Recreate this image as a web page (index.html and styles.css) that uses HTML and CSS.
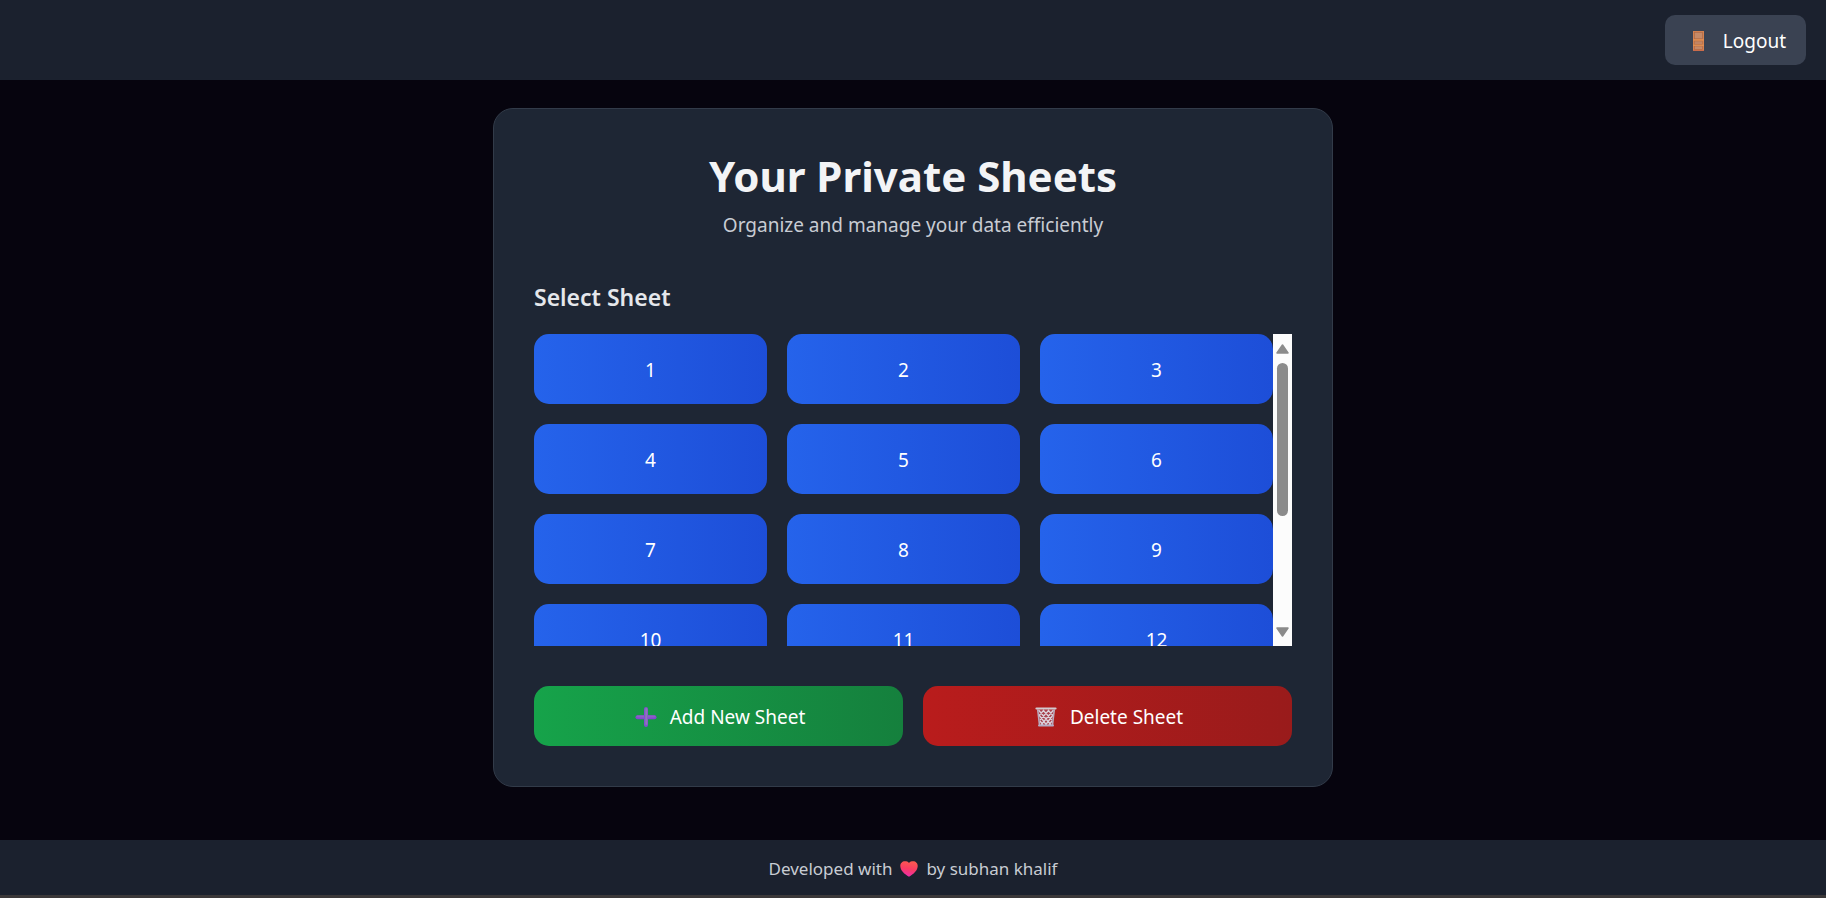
FILE: index.html
```html
<!DOCTYPE html>
<html lang="en">
<head>
<meta charset="utf-8">
<meta name="viewport" content="width=device-width, initial-scale=1">
<title>Your Private Sheets</title>
<link rel="stylesheet" href="styles.css">
</head>
<body>
<header class="topbar">
  <button class="logout" type="button">
    <svg class="icon" viewBox="0 0 28 20" aria-hidden="true">
      <rect x="8" y="0" width="11" height="20" fill="#d58250"/>
      <rect x="9.5" y="1.3" width="8" height="6.5" fill="#c58a68" stroke="#ad6845" stroke-width=".7"/>
      <rect x="9.5" y="10" width="8" height="3.6" fill="#c28463" stroke="#b87044" stroke-width=".7"/>
      <rect x="9.5" y="15" width="8" height="3.6" fill="#c58a68" stroke="#b8653f" stroke-width=".7"/>
      <path d="M8 8.9h11M8 14.3h11" stroke="#e39454"/>
      <path d="M8 19.6h11" stroke="#c6634a" stroke-width=".8"/>
    </svg>
    <span>Logout</span>
  </button>
</header>

<main class="content">
  <section class="card">
    <h1 class="title">Your Private Sheets</h1>
    <p class="subtitle">Organize and manage your data efficiently</p>
    <h2 class="section-title">Select Sheet</h2>
    <div class="sheets">
      <div class="sheet-grid">
        <button class="sheet" type="button">1</button>
        <button class="sheet" type="button">2</button>
        <button class="sheet" type="button">3</button>
        <button class="sheet" type="button">4</button>
        <button class="sheet" type="button">5</button>
        <button class="sheet" type="button">6</button>
        <button class="sheet" type="button">7</button>
        <button class="sheet" type="button">8</button>
        <button class="sheet" type="button">9</button>
        <button class="sheet" type="button">10</button>
        <button class="sheet" type="button">11</button>
        <button class="sheet" type="button">12</button>
      </div>
      <div class="scrollbar" aria-hidden="true">
        <svg class="arrow" viewBox="0 0 13 10"><path d="M6.5 1 12 9H1z" fill="#8b8b8b" stroke="#8b8b8b" stroke-width="1.500" stroke-linejoin="round"/></svg>
        <div class="track"><div class="thumb"></div></div>
        <svg class="arrow" viewBox="0 0 13 10"><path d="M6.5 9 12 1H1z" fill="#8b8b8b" stroke="#8b8b8b" stroke-width="1.500" stroke-linejoin="round"/></svg>
      </div>
    </div>
    <div class="actions">
      <button class="action add" type="button">
        <svg class="icon" viewBox="0 0 28 20" aria-hidden="true">
          <path d="M5.5 10.2h17" stroke="#8446d2" stroke-width="4" stroke-linecap="round"/>
          <path d="M5.5 9.4h17" stroke="#8b62c4" stroke-width="2" stroke-linecap="round"/>
          <path d="M14 2v16" stroke="#8050d0" stroke-width="4" stroke-linecap="round"/>
          <path d="M14.3 2v15" stroke="#8e78b8" stroke-width="2" stroke-linecap="round"/>
        </svg>
        <span>Add New Sheet</span>
      </button>
      <button class="action delete" type="button">
        <svg class="icon" viewBox="0 0 28 20" aria-hidden="true">
          <path d="M5.5 2.5h17L20.6 18H7.4z" fill="#a8404c"/>
          <path d="M6.5 3l12.5 15M11 3l8.8 10M16 3l5 5.5M7 8l7.5 10M8 14l3 4M21.5 3 9 18M17 3 8 13M12 3 7 8.5M21 8l-7.5 10M20 14l-3 4" stroke="#dcd2dc" stroke-width="1.3" fill="none"/>
          <path d="M5.7 2.5 7.5 18M22.3 2.5 20.5 18" stroke="#b9a9bb" stroke-width="1.6"/>
          <path d="M4.500 1.500h19" stroke="#d2cad0" stroke-width="2.2" stroke-linecap="round"/>
          <path d="M7 18.6h14" stroke="#b4aec6" stroke-width="2" stroke-linecap="round"/>
        </svg>
        <span>Delete Sheet</span>
      </button>
    </div>
  </section>
</main>

<footer class="footer">
  <p class="credit">
    <span>Developed with</span>
    <svg class="heart" viewBox="0 0 18 16" role="img" aria-label="love">
      <defs>
        <linearGradient id="heart-fill" x1=".6" y1="0" x2=".4" y2="1">
          <stop offset="0" stop-color="#fb5a50"/>
          <stop offset=".5" stop-color="#f83c63"/>
          <stop offset="1" stop-color="#ee2dae"/>
        </linearGradient>
      </defs>
      <path d="M9 1.900C7.900.7 6.400.3 4.900.3 2.200.3.300 2.400.300 5c0 4.300 4.200 8.300 8.700 10.700C13.500 13.300 17.700 9.300 17.700 5c0-2.600-1.900-4.700-4.600-4.700-1.500 0-3 .4-4.100 1.600z" fill="url(#heart-fill)"/>
    </svg>
    <span>by subhan khalif</span>
  </p>
</footer>
</body>
</html>
```
FILE: styles.css
```css
* {
  box-sizing: border-box;
}

body {
  margin: 0;
  min-height: 100vh;
  display: flex;
  flex-direction: column;
  background: #06040e;
  color: #ffffff;
  font-family: "Noto Sans", "Open Sans", sans-serif;
  font-size: 19px;
  line-height: 30px;
}

h1,
h2,
p {
  margin: 0;
}

button {
  border: 0;
  color: inherit;
  font: inherit;
  cursor: pointer;
}

.topbar {
  display: flex;
  justify-content: flex-end;
  padding: 15px 20px;
  background: #1b212e;
}

.logout {
  display: flex;
  align-items: center;
  gap: 10px;
  padding: 11px 20px 9px;
  border-radius: 10px;
  background: #3a4252;
}

.icon {
  width: 28px;
  height: 20px;
  flex: none;
}

.content {
  flex: 1;
  display: flex;
  justify-content: center;
  align-items: flex-start;
  padding: 28px 20px 52px;
}

.card {
  width: 100%;
  max-width: 840px;
  padding: 40px;
  border: 1px solid #323b49;
  border-radius: 20px;
  background: #1e2634;
}

.title {
  margin-bottom: 7px;
  color: #f3f4f6;
  font-size: 42px;
  font-weight: 700;
  line-height: 54px;
  text-align: center;
}

.subtitle {
  margin-bottom: 40px;
  color: #c8ccd3;
  text-align: center;
}

.section-title {
  margin-bottom: 19px;
  color: #e5e7eb;
  font-size: 23px;
  font-weight: 600;
  line-height: 35px;
}

.sheets {
  display: flex;
  height: 312px;
  margin-bottom: 40px;
}

.sheet-grid {
  flex: 1;
  display: grid;
  grid-template-columns: repeat(3, 1fr);
  grid-auto-rows: 70px;
  gap: 20px;
  overflow-y: auto;
  scrollbar-width: none;
}

.sheet {
  padding: 2px 6px 0;
  border-radius: 15px;
  background: linear-gradient(to right, #2563eb, #1d4ed8);
}

.scrollbar {
  display: flex;
  flex-direction: column;
  align-items: center;
  width: 19px;
  padding: 10px 0 9px;
  background: #fcfcfc;
}

.arrow {
  width: 13px;
  height: 10px;
}

.track {
  flex: 1;
  width: 11px;
  padding: 9px 0;
}

.thumb {
  height: 60%;
  border-radius: 6px;
  background: #8b8b8b;
}

.actions {
  display: grid;
  grid-template-columns: repeat(2, 1fr);
  gap: 20px;
}

.action {
  display: flex;
  justify-content: center;
  align-items: center;
  gap: 10px;
  padding: 16px 15px 14px;
  border-radius: 15px;
}

.add {
  background: linear-gradient(to right, #16a34a, #15803d);
}

.delete {
  background: linear-gradient(to right, #b91c1c, #991b1b);
}

.footer {
  padding: 16px 20px 14px;
  border-bottom: 3px solid #3b3839;
  background: #1b212e;
}

.credit {
  display: flex;
  justify-content: center;
  align-items: center;
  gap: 8px;
  color: #c8ccd3;
  font-size: 17px;
  line-height: 25px;
}

.heart {
  width: 18px;
  height: 16px;
}
```
